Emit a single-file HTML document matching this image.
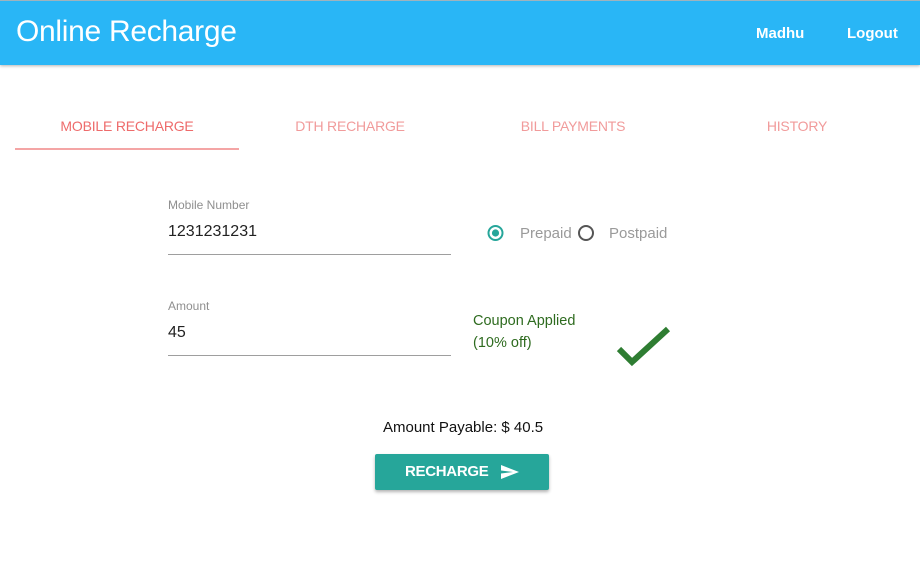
<!DOCTYPE html>
<html><head><style>
*{margin:0;padding:0;box-sizing:border-box}
body{width:920px;height:581px;background:#fff;font-family:"Liberation Sans",sans-serif;position:relative;overflow:hidden}
.hdr{position:absolute;left:0;top:0;width:920px;height:65px;background:#29b6f6;border-top:1px solid #9fb3bd;box-shadow:0 1px 3px rgba(0,0,0,.3)}
.t{position:absolute;white-space:nowrap}
.tab{position:absolute;top:118px;font-size:14px;transform:translateX(-50%);color:#f19b9b;white-space:nowrap;letter-spacing:-0.2px}
.lbl{font-size:12px;color:#8f8f8f}
.val{font-size:16px;color:#222}
.line{position:absolute;height:1px;background:#9e9e9e;left:168px;width:283px}
</style></head><body>
<div class="hdr"></div>
<div class="t" style="left:16px;top:15px;font-size:30px;color:#fff;letter-spacing:-0.3px">Online Recharge</div>
<div class="t" style="left:756px;top:25px;font-size:15px;font-weight:bold;color:#fff">Madhu</div>
<div class="t" style="left:847px;top:25px;font-size:15px;font-weight:bold;color:#fff">Logout</div>

<div class="tab" style="left:127px;color:#ee6b6b">MOBILE RECHARGE</div>
<div class="tab" style="left:350px">DTH RECHARGE</div>
<div class="tab" style="left:573px">BILL PAYMENTS</div>
<div class="tab" style="left:797px">HISTORY</div>
<div style="position:absolute;left:15px;top:148px;width:224px;height:2px;background:#f4a5a5"></div>

<div class="t lbl" style="left:168px;top:198px">Mobile Number</div>
<div class="t val" style="left:168px;top:223px">1231231231</div>
<div class="line" style="top:254px"></div>
<div class="t lbl" style="left:168px;top:299px">Amount</div>
<div class="t val" style="left:168px;top:324px">45</div>
<div class="line" style="top:355px"></div>

<svg style="position:absolute;left:486px;top:224px" width="20" height="18"><circle cx="9.5" cy="9" r="7" fill="none" stroke="#26a69a" stroke-width="2"/><circle cx="9.5" cy="9" r="3.6" fill="#26a69a"/></svg>
<div class="t" style="left:520px;top:225px;font-size:15px;color:#9a9a9a">Prepaid</div>
<svg style="position:absolute;left:576px;top:224px" width="20" height="18"><circle cx="10" cy="9" r="7" fill="none" stroke="#555" stroke-width="2"/></svg>
<div class="t" style="left:609px;top:225px;font-size:15px;color:#9a9a9a">Postpaid</div>

<div class="t" style="left:473px;top:310px;font-size:14.5px;color:#2e6b1f;line-height:22px">Coupon Applied<br>(10% off)</div>
<svg style="position:absolute;left:615px;top:325px" width="58" height="44"><path d="M4 24 L17 37 L53 4" fill="none" stroke="#2e7d32" stroke-width="6"/></svg>

<div class="t" style="left:383px;top:419px;font-size:15px;color:#111">Amount Payable: $ 40.5</div>
<div style="position:absolute;left:375px;top:454px;width:174px;height:36px;background:#26a69a;border-radius:2px;box-shadow:0 2px 3px rgba(0,0,0,.3)"></div>
<div class="t" style="left:405px;top:463px;font-size:15px;font-weight:bold;color:#fff;letter-spacing:-0.3px">RECHARGE</div>
<svg style="position:absolute;left:500px;top:464px" width="20" height="16"><path d="M1 1 L19 8 L1 15 L1 9.5 L13 8 L1 6.5 Z" fill="#fff"/></svg>
</body></html>
